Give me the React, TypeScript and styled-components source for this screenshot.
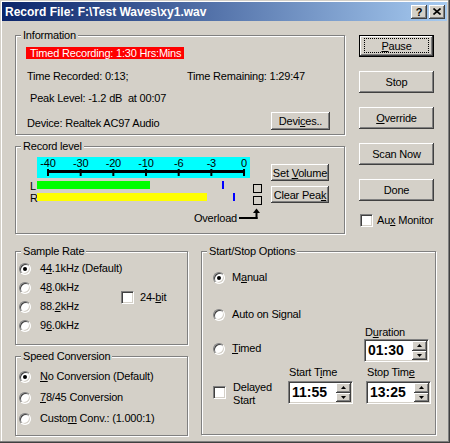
import React from "react";
import styled, { createGlobalStyle } from "styled-components";

const FACE = "#d4d0c8";
const SHADOW = "#808080";
const DARK = "#404040";

const GlobalStyle = createGlobalStyle`
  html, body {
    margin: 0;
    padding: 0;
    background: ${FACE};
  }
  body {
    font-family: "Liberation Sans", Arial, sans-serif;
    font-size: 11px;
    letter-spacing: -0.2px;
    color: #000;
  }
`;

const Window = styled.div`
  box-sizing: border-box;
  width: 450px;
  height: 443px;
  padding: 2px 3px 2px 2px;
  background: ${FACE};
  box-shadow: inset -1px -1px ${DARK}, inset -2px -2px ${SHADOW},
    inset 1px 1px ${FACE}, inset 2px 2px #fff;
  display: flex;
  flex-direction: column;
  overflow: hidden;
`;

const TitleBar = styled.div`
  height: 19px;
  display: flex;
  align-items: center;
  gap: 2px;
  padding: 0 2px 0 3px;
  background: linear-gradient(to right, #0a246a, #a6caf0);
  color: #fff;
  font-weight: bold;
  font-size: 12px;
  letter-spacing: 0;
`;

const TitleText = styled.div`
  flex: 1;
  white-space: nowrap;
`;

const RaisedButton = styled.button`
  box-sizing: border-box;
  margin: 0;
  padding: 0;
  border: none;
  background: ${FACE};
  box-shadow: inset -1px -1px ${DARK}, inset 1px 1px #fff,
    inset -2px -2px ${SHADOW}, inset 2px 2px ${FACE};
  font-family: inherit;
  font-size: 11px;
  letter-spacing: inherit;
  color: #000;
  display: flex;
  align-items: center;
  justify-content: center;
  white-space: pre;
`;

const CaptionButton = styled(RaisedButton)`
  width: 16px;
  height: 14px;
  font-weight: bold;
  font-size: 11px;
  line-height: 14px;
`;

const Main = styled.div`
  display: flex;
  flex-direction: column;
  padding-left: 13px;
`;

const TopRow = styled.div`
  display: flex;
  align-items: flex-start;
  margin-top: 8px;
`;

const LeftStack = styled.div`
  display: flex;
  flex-direction: column;
  gap: 5px;
`;

const BottomRow = styled.div`
  display: flex;
  align-items: flex-start;
  gap: 13px;
  margin-top: 11px;
`;

const Group = styled.fieldset<{ $w: number; $h: number }>`
  box-sizing: border-box;
  margin: 0;
  padding: 0;
  min-width: 0;
  width: ${(p) => p.$w}px;
  height: ${(p) => p.$h}px;
  border: 1px solid ${SHADOW};
  box-shadow: inset 1px 1px #fff, 1px 1px #fff;
`;

const Legend = styled.legend`
  margin-left: 5px;
  padding: 0 2px;
  line-height: 13px;
  font-size: 11px;
  background: ${FACE};
`;

const Key = styled.span`
  text-decoration: underline;
  text-underline-offset: 1px;
`;

/* ---------- Information ---------- */

const InfoBody = styled.div`
  display: flex;
  flex-direction: column;
  align-items: flex-start;
  padding-top: 5px;
`;

const Alert = styled.div`
  box-sizing: border-box;
  margin-left: 10px;
  width: 158px;
  height: 12px;
  line-height: 12px;
  padding-left: 4px;
  background: #ff0000;
  color: #fff;
  white-space: nowrap;
  overflow: hidden;
`;

const InfoRow = styled.div<{ $top: number; $pad: number; $h?: number }>`
  align-self: stretch;
  display: flex;
  align-items: flex-end;
  margin-top: ${(p) => p.$top}px;
  padding-left: ${(p) => p.$pad}px;
  height: ${(p) => p.$h ?? 13}px;
  line-height: 13px;
  white-space: pre;
`;

const InfoCell = styled.span<{ $w?: number }>`
  width: ${(p) => (p.$w ? `${p.$w}px` : "auto")};
  flex: ${(p) => (p.$w ? "none" : "1")};
`;

const DevicesButton = styled(RaisedButton)`
  width: 59px;
  height: 18px;
  margin-right: 14px;
`;

/* ---------- Record level ---------- */

const LevelBody = styled.div`
  display: flex;
  align-items: flex-start;
  padding: 4px 0 0 14px;
`;

const Meter = styled.div`
  width: 232px;
  display: flex;
  flex-direction: column;
`;

const Scale = styled.svg`
  display: block;
  margin-left: 7px;
  width: 213px;
  height: 21px;
  background: #00ffff;
`;

const ChannelRow = styled.div<{ $top: number }>`
  display: flex;
  align-items: flex-start;
  height: 8px;
  margin-top: ${(p) => p.$top}px;
`;

const ChannelLabel = styled.span`
  width: 7px;
  height: 10px;
  font-size: 11px;
  line-height: 10px;
`;

const Track = styled.div`
  position: relative;
  width: 213px;
  height: 8px;
`;

const Bar = styled.div<{ $color: string }>`
  height: 8px;
  background: ${(p) => p.$color};
`;

const PeakMark = styled.div`
  position: absolute;
  top: 0;
  width: 2px;
  height: 8px;
  background: #0000ff;
`;

const OverloadBox = styled.div`
  box-sizing: border-box;
  width: 9px;
  height: 9px;
  margin: 3px 0 0 3px;
  border: 1px solid #000;
`;

const OverloadRow = styled.div`
  display: flex;
  justify-content: flex-end;
  align-items: flex-end;
  height: 18px;
  margin-top: 6px;
`;

const OverloadText = styled.span`
  line-height: 13px;
`;

const LevelButtons = styled.div`
  display: flex;
  flex-direction: column;
  gap: 5px;
  margin: 7px 0 0 9px;
`;

const SmallButton = styled(RaisedButton)`
  width: 58px;
  height: 17px;
`;

/* ---------- Right buttons ---------- */

const SideColumn = styled.div`
  display: flex;
  flex-direction: column;
  gap: 14px;
  margin: 6px 0 0 14px;
`;

const SideButton = styled(RaisedButton)<{ $default?: boolean }>`
  position: relative;
  width: 75px;
  height: 22px;
  border: ${(p) => (p.$default ? "1px solid #000" : "none")};
  &::after {
    content: "";
    display: ${(p) => (p.$default ? "block" : "none")};
    position: absolute;
    inset: 2px 4px 3px 4px;
    border: 1px dotted #000;
  }
`;

const Option = styled.div<{ $h?: number; $gap?: number }>`
  display: flex;
  align-items: center;
  gap: ${(p) => p.$gap ?? 9}px;
  height: ${(p) => p.$h ?? 13}px;
  line-height: 13px;
  white-space: nowrap;
`;

const Radio = styled.span<{ $on?: boolean }>`
  box-sizing: border-box;
  position: relative;
  flex: none;
  width: 12px;
  height: 12px;
  border-radius: 50%;
  background: #fff;
  border: 1px solid;
  border-color: ${SHADOW} #fff #fff ${SHADOW};
  box-shadow: inset 1px 1px ${DARK}, inset -1px -1px ${FACE};
  &::after {
    content: "";
    display: ${(p) => (p.$on ? "block" : "none")};
    position: absolute;
    left: 3px;
    top: 3px;
    width: 4px;
    height: 4px;
    border-radius: 50%;
    background: #000;
  }
`;

const CheckBox = styled.span<{ $top?: number }>`
  box-sizing: border-box;
  flex: none;
  width: 13px;
  height: 13px;
  margin-top: ${(p) => p.$top ?? 0}px;
  background: #fff;
  border: 1px solid;
  border-color: ${SHADOW} #fff #fff ${SHADOW};
  box-shadow: inset 1px 1px ${DARK}, inset -1px -1px ${FACE};
`;

/* ---------- Sample rate / speed ---------- */

const SampleBody = styled.div`
  display: grid;
  grid-template-columns: 102px auto;
  grid-template-rows: repeat(4, 19px);
  padding: 1px 0 0 3px;
`;

const RateOption = styled(Option)`
  grid-column: 1;
`;

const BitOption = styled(Option)`
  grid-column: 2;
  grid-row: 2 / 4;
  align-self: center;
`;

const SpeedBody = styled.div`
  display: flex;
  flex-direction: column;
  padding: 3px 0 0 3px;
`;

const LeftColumn = styled.div`
  display: flex;
  flex-direction: column;
  gap: 5px;
`;

/* ---------- Start/Stop ---------- */

const StartStopBody = styled.div`
  display: flex;
  flex-direction: column;
  padding-left: 11px;
`;

const Spaced = styled.div<{ $top: number }>`
  margin-top: ${(p) => p.$top}px;
`;

const TimerGrid = styled.div`
  display: grid;
  grid-template-columns: 75px 76px 67px;
  grid-template-rows: 13px 27px 15px 24px;
  margin-top: 5px;
`;

const Cell = styled.div<{ $col: string; $row: string; $left?: number; $top?: number }>`
  grid-column: ${(p) => p.$col};
  grid-row: ${(p) => p.$row};
  padding-left: ${(p) => p.$left ?? 0}px;
  margin-top: ${(p) => p.$top ?? 0}px;
  line-height: 13px;
  white-space: nowrap;
`;

const DelayedCell = styled(Cell)`
  display: flex;
  align-items: flex-start;
  gap: 7px;
`;

const Spin = styled.div<{ $offset?: number }>`
  box-sizing: border-box;
  width: 65px;
  height: 23px;
  margin-left: ${(p) => p.$offset ?? 0}px;
  display: flex;
  align-items: stretch;
  background: #fff;
  border: 1px solid;
  border-color: ${SHADOW} #fff #fff ${SHADOW};
  box-shadow: inset 1px 1px ${DARK}, inset -1px -1px ${FACE};
  padding: 1px;
`;

const SpinValue = styled.span`
  flex: 1;
  padding-left: 2px;
  font-weight: bold;
  font-size: 14px;
  letter-spacing: 0;
  line-height: 19px;
`;

const SpinArrows = styled.div`
  display: flex;
  flex-direction: column;
  width: 15px;
`;

const SpinArrow = styled(RaisedButton)`
  flex: 1;
  width: 15px;
`;

function Arrow({ up }: { up?: boolean }) {
  return (
    <svg width="5" height="3" viewBox="0 0 5 3">
      <polygon points={up ? "2.5,0 5,3 0,3" : "0,0 5,0 2.5,3"} fill="#000" />
    </svg>
  );
}

function SpinBox({ value, offset }: { value: string; offset?: number }) {
  return (
    <Spin $offset={offset}>
      <SpinValue>{value}</SpinValue>
      <SpinArrows>
        <SpinArrow>
          <Arrow up />
        </SpinArrow>
        <SpinArrow>
          <Arrow />
        </SpinArrow>
      </SpinArrows>
    </Spin>
  );
}

const scaleLabels = ["-40", "-30", "-20", "-10", "-6", "-3", "0"];

const channels = [
  { name: "L", level: 113, peak: 185, color: "#00ff00" },
  { name: "R", level: 170, peak: 196, color: "#ffff00" },
];

export default function App() {
  const tickX = (i: number) => 11 + i * 32.67;
  return (
    <>
      <GlobalStyle />
      <Window>
        <TitleBar>
          <TitleText>Record File: F:\Test Waves\xy1.wav</TitleText>
          <CaptionButton>?</CaptionButton>
          <CaptionButton>
            <svg width="8" height="7" viewBox="0 0 8 7">
              <path d="M0.5 0.5 L7.5 6.5 M7.5 0.5 L0.5 6.5" stroke="#000" strokeWidth="1.6" />
            </svg>
          </CaptionButton>
        </TitleBar>

        <Main>
          <TopRow>
            <LeftStack>
              <Group $w={330} $h={106}>
                <Legend>Information</Legend>
                <InfoBody>
                  <Alert>Timed Recording: 1:30 Hrs:Mins</Alert>
                  <InfoRow $top={11} $pad={11}>
                    <InfoCell $w={160}>Time Recorded: 0:13;</InfoCell>
                    <InfoCell>Time Remaining: 1:29:47</InfoCell>
                  </InfoRow>
                  <InfoRow $top={9} $pad={14}>
                    Peak Level: -1.2 dB  at 00:07
                  </InfoRow>
                  <InfoRow $top={7} $pad={11} $h={18}>
                    <InfoCell>Device: Realtek AC97 Audio</InfoCell>
                    <DevicesButton>
                      <span>
                        Devi<Key>c</Key>es..
                      </span>
                    </DevicesButton>
                  </InfoRow>
                </InfoBody>
              </Group>

              <Group $w={330} $h={94}>
                <Legend>Record level</Legend>
                <LevelBody>
                  <Meter>
                    <Scale viewBox="0 0 213 21">
                      {scaleLabels.map((t, i) => (
                        <text
                          key={t}
                          x={tickX(i)}
                          y={10}
                          textAnchor="middle"
                          fontSize="11"
                          fontFamily="Liberation Sans, Arial, sans-serif"
                        >
                          {t}
                        </text>
                      ))}
                      <rect x={10} y={13} width={tickX(6) - 9} height={3} fill="#000" />
                      {scaleLabels.map((t, i) => (
                        <rect key={t} x={tickX(i) - 1} y={12} width={2} height={7} fill="#000" />
                      ))}
                    </Scale>
                    {channels.map((c, i) => (
                      <ChannelRow key={c.name} $top={i === 0 ? 3 : 4}>
                        <ChannelLabel>{c.name}</ChannelLabel>
                        <Track>
                          <Bar $color={c.color} style={{ width: c.level }} />
                          <PeakMark style={{ left: c.peak }} />
                        </Track>
                        <OverloadBox />
                      </ChannelRow>
                    ))}
                    <OverloadRow>
                      <OverloadText>Overload</OverloadText>
                      <svg width="25" height="18" viewBox="0 0 25 18">
                        <rect x="2" y="10" width="18.5" height="2" fill="#000" />
                        <rect x="18.5" y="5" width="2" height="7" fill="#000" />
                        <polygon points="19.5,1.5 16,6 23,6" fill="#000" />
                      </svg>
                    </OverloadRow>
                  </Meter>
                  <LevelButtons>
                    <SmallButton>
                      <span>
                        Set <Key>V</Key>olume
                      </span>
                    </SmallButton>
                    <SmallButton>
                      <span>
                        Clear Pea<Key>k</Key>
                      </span>
                    </SmallButton>
                  </LevelButtons>
                </LevelBody>
              </Group>
            </LeftStack>

            <SideColumn>
              <SideButton $default>
                <span>
                  <Key>P</Key>ause
                </span>
              </SideButton>
              <SideButton>Stop</SideButton>
              <SideButton>
                <span>
                  <Key>O</Key>verride
                </span>
              </SideButton>
              <SideButton>Scan Now</SideButton>
              <SideButton>Done</SideButton>
              <Option $gap={4} style={{ marginTop: -1, marginLeft: 1 }}>
                <CheckBox />
                <span>
                  Au<Key>x</Key> Monitor
                </span>
              </Option>
            </SideColumn>
          </TopRow>

          <BottomRow>
            <LeftColumn>
              <Group $w={173} $h={100}>
                <Legend>Sample Rate</Legend>
                <SampleBody>
                  <RateOption $h={19}>
                    <Radio $on />
                    <span>
                      4<Key>4</Key>.1kHz (Default)
                    </span>
                  </RateOption>
                  <RateOption $h={19}>
                    <Radio />
                    <span>
                      4<Key>8</Key>.0kHz
                    </span>
                  </RateOption>
                  <RateOption $h={19}>
                    <Radio />
                    <span>
                      88.<Key>2</Key>kHz
                    </span>
                  </RateOption>
                  <RateOption $h={19}>
                    <Radio />
                    <span>
                      9<Key>6</Key>.0kHz
                    </span>
                  </RateOption>
                  <BitOption $gap={6}>
                    <CheckBox />
                    <span>
                      24-<Key>b</Key>it
                    </span>
                  </BitOption>
                </SampleBody>
              </Group>

              <Group $w={173} $h={86}>
                <Legend>Speed Conversion</Legend>
                <SpeedBody>
                  <Option $h={21}>
                    <Radio $on />
                    <span>
                      <Key>N</Key>o Conversion (Default)
                    </span>
                  </Option>
                  <Option $h={21}>
                    <Radio />
                    <span>
                      <Key>7</Key>8/45 Conversion
                    </span>
                  </Option>
                  <Option $h={21}>
                    <Radio />
                    <span>
                      Custo<Key>m</Key> Conv.: (1.000:1)
                    </span>
                  </Option>
                </SpeedBody>
              </Group>
            </LeftColumn>

            <Group $w={235} $h={190}>
              <Legend>Start/Stop Options</Legend>
              <StartStopBody>
                <Spaced $top={13}>
                  <Option $gap={7}>
                    <Radio $on />
                    <span>
                      M<Key>a</Key>nual
                    </span>
                  </Option>
                </Spaced>
                <Spaced $top={24}>
                  <Option $gap={7}>
                    <Radio />
                    <span>Auto on Signal</span>
                  </Option>
                </Spaced>
                <TimerGrid>
                  <Cell $col="3" $row="1" $left={1}>
                    D<Key>u</Key>ration
                  </Cell>
                  <Cell $col="1 / 3" $row="2" $top={3}>
                    <Option $gap={7}>
                      <Radio />
                      <span>
                        <Key>T</Key>imed
                      </span>
                    </Option>
                  </Cell>
                  <Cell $col="3" $row="2">
                    <SpinBox value="01:30" />
                  </Cell>
                  <Cell $col="2" $row="3" $left={1}>
                    Start T<Key>i</Key>me
                  </Cell>
                  <Cell $col="3" $row="3" $left={3}>
                    Stop Tim<Key>e</Key>
                  </Cell>
                  <DelayedCell $col="1" $row="4">
                    <CheckBox $top={5} />
                    <span>
                      Delayed
                      <br />
                      Start
                    </span>
                  </DelayedCell>
                  <Cell $col="2" $row="4">
                    <SpinBox value="11:55" />
                  </Cell>
                  <Cell $col="3" $row="4">
                    <SpinBox value="13:25" offset={2} />
                  </Cell>
                </TimerGrid>
              </StartStopBody>
            </Group>
          </BottomRow>
        </Main>
      </Window>
    </>
  );
}
